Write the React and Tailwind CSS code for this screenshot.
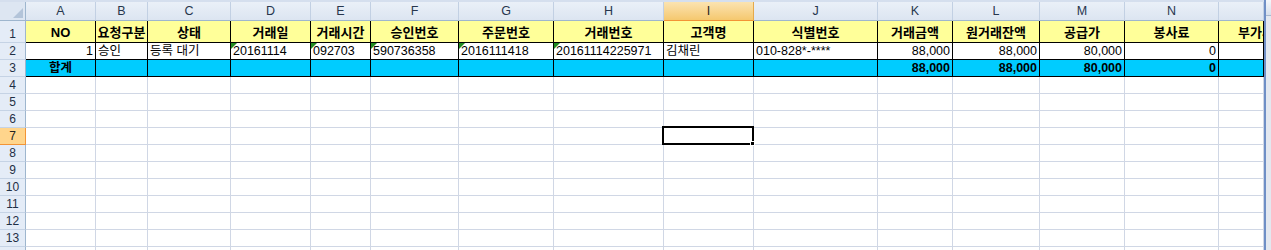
import React from 'react';

// column letters, widths (incl. right gridline)
const cols = [
    { key: 'A', w: 'w-[70px]' },
    { key: 'B', w: 'w-[52px]' },
    { key: 'C', w: 'w-[83px]' },
    { key: 'D', w: 'w-[80px]' },
    { key: 'E', w: 'w-[60px]' },
    { key: 'F', w: 'w-[88px]' },
    { key: 'G', w: 'w-[95px]' },
    { key: 'H', w: 'w-[110px]' },
    { key: 'I', w: 'w-[90px]' },
    { key: 'J', w: 'w-[124px]' },
    { key: 'K', w: 'w-[75px]' },
    { key: 'L', w: 'w-[87px]' },
    { key: 'M', w: 'w-[85px]' },
    { key: 'N', w: 'w-[94px]' },
    { key: 'O', w: 'w-[45px]' },
];

const titles = ['NO', '요청구분', '상태', '거래일', '거래시간', '승인번호', '주문번호', '거래번호', '고객명', '식별번호', '거래금액', '원거래잔액', '공급가', '봉사료', '부가세'];

// row 2: [text, align, greenFlag]
const row2 = [
    ['1', 'r'], ['승인', 'l'], ['등록 대기', 'l'], ['20161114', 'l', true], ['092703', 'l', true],
    ['590736358', 'l', true], ['2016111418', 'l', true], ['20161114225971', 'l', true], ['김채린', 'l'],
    ['010-828*-****', 'l'], ['88,000', 'r'], ['88,000', 'r'], ['80,000', 'r'], ['0', 'r'], ['', 'l'],
];

const row3 = ['합계', '', '', '', '', '', '', '', '', '', '88,000', '88,000', '80,000', '0', ''];

const font = "font-['Liberation_Sans','Noto_Sans_CJK_KR',sans-serif]";

function GreenMark() {
    return (
        <svg className="absolute left-0 top-0" width="6" height="6" viewBox="0 0 6 6">
            <polygon points="0,0 6,0 0,6" fill="#1f8a1f" />
        </svg>
    );
}

function RowHead({ n, h, active }) {
    return (
        <div
            className={`w-[26px] shrink-0 ${h} flex items-end justify-center text-[12px] leading-[15px] border-r border-b ${
                active
                    ? 'bg-[#ffd58c] border-[#f29436] text-[#222]'
                    : 'bg-[#e4ecf7] border-r-[#9eb6ce] border-b-[#c5d3e5] text-[#1f2f45]'
            }`}
        >
            {n}
        </div>
    );
}

function EmptyRow({ n, label }) {
    const active = n === 7;
    return (
        <div className="flex">
            <RowHead n={label} h="h-[17px]" active={active} />
            {cols.map((c) => (
                <div key={c.key} className={`${c.w} shrink-0 h-[17px] border-r border-b border-[#d0d7e5] bg-white relative`}>
                    {active && c.key === 'I' && (
                        <div className="absolute -left-[2px] -top-[2px] w-[92px] h-[19px] border-2 border-black z-10">
                            <div className="absolute -right-[3px] -bottom-[3px] w-[5px] h-[5px] bg-black border border-white" />
                        </div>
                    )}
                </div>
            ))}
        </div>
    );
}

export default function App() {
    return (
        <div className={`w-[1271px] h-[250px] overflow-hidden flex bg-white ${font}`}>
            <div className="w-[1264px] shrink-0">
                {/* column letters */}
                <div className="flex h-[21px] border-t-2 border-[#d5dfee]">
                    <div className="w-[26px] shrink-0 border-r border-b border-[#9eb6ce] bg-[#dde6f2] relative">
                        <svg className="absolute right-[2px] bottom-[2px]" width="10" height="10" viewBox="0 0 10 10">
                            <polygon points="10,0 10,10 0,10" fill="#b3c4d9" />
                        </svg>
                    </div>
                    {cols.map((c) => (
                        <div
                            key={c.key}
                            className={`${c.w} shrink-0 flex items-center justify-center text-[12.5px] border-r border-b ${
                                c.key === 'I'
                                    ? 'bg-gradient-to-b from-[#fbe3b0] to-[#f5c86e] border-r-[#e5a94b] border-b-[#f29436] text-[#222]'
                                    : 'bg-gradient-to-b from-[#eaf0f8] to-[#dce5f1] border-r-[#c2d0e3] border-b-[#9eb6ce] text-[#27364d]'
                            }`}
                        >
                            {c.key === 'O' ? '' : c.key}
                        </div>
                    ))}
                </div>

                {/* row 1: titles */}
                <div className="flex">
                    <RowHead n={1} h="h-[22px]" />
                    {cols.map((c, i) => (
                        <div
                            key={c.key}
                            className={`${c.w} shrink-0 h-[22px] border-r border-b border-black bg-[#ffff99] overflow-hidden flex items-end pb-[1px] text-[13px] leading-[17px] font-bold text-black whitespace-nowrap ${
                                c.key === 'O' ? 'justify-start' : 'justify-center'
                            }`}
                        >
                            {c.key === 'O' ? (
                                <div className="w-[74px] shrink-0 text-center">{titles[i]}</div>
                            ) : (
                                titles[i]
                            )}
                        </div>
                    ))}
                </div>

                {/* row 2: data */}
                <div className="flex">
                    <RowHead n={2} h="h-[17px]" />
                    {cols.map((c, i) => {
                        const [text, align, flag] = row2[i];
                        return (
                            <div
                                key={c.key}
                                className={`${c.w} shrink-0 h-[17px] border-r border-b border-black bg-white relative overflow-hidden flex items-end px-[2px] text-[12.5px] leading-[15px] text-black whitespace-nowrap ${
                                    align === 'r' ? 'justify-end' : 'justify-start'
                                }`}
                            >
                                {flag && <GreenMark />}
                                {text}
                            </div>
                        );
                    })}
                </div>

                {/* row 3: totals */}
                <div className="flex">
                    <RowHead n={3} h="h-[17px]" />
                    {cols.map((c, i) => (
                        <div
                            key={c.key}
                            className={`${c.w} shrink-0 h-[17px] border-r border-b border-black bg-[#00ccff] flex items-end px-[2px] text-[12.5px] leading-[15px] font-bold text-black whitespace-nowrap ${
                                i === 0 ? 'justify-center' : 'justify-end'
                            }`}
                        >
                            {row3[i]}
                        </div>
                    ))}
                </div>

                {[4, 5, 6, 7, 8, 9, 10, 11, 12, 13, 14].map((n) => (
                    <EmptyRow key={n} n={n} label={n === 14 ? '' : n} />
                ))}
            </div>

            {/* vertical scrollbar edge */}
            <div className="w-[7px] shrink-0 border-l-2 border-[#6f8fc6] bg-[#e3e8f0] flex flex-col">
                <div className="h-[16px] border-b border-[#a9b8cf] bg-gradient-to-b from-[#f4f7fb] to-[#d6dfec]" />
            </div>
        </div>
    );
}
